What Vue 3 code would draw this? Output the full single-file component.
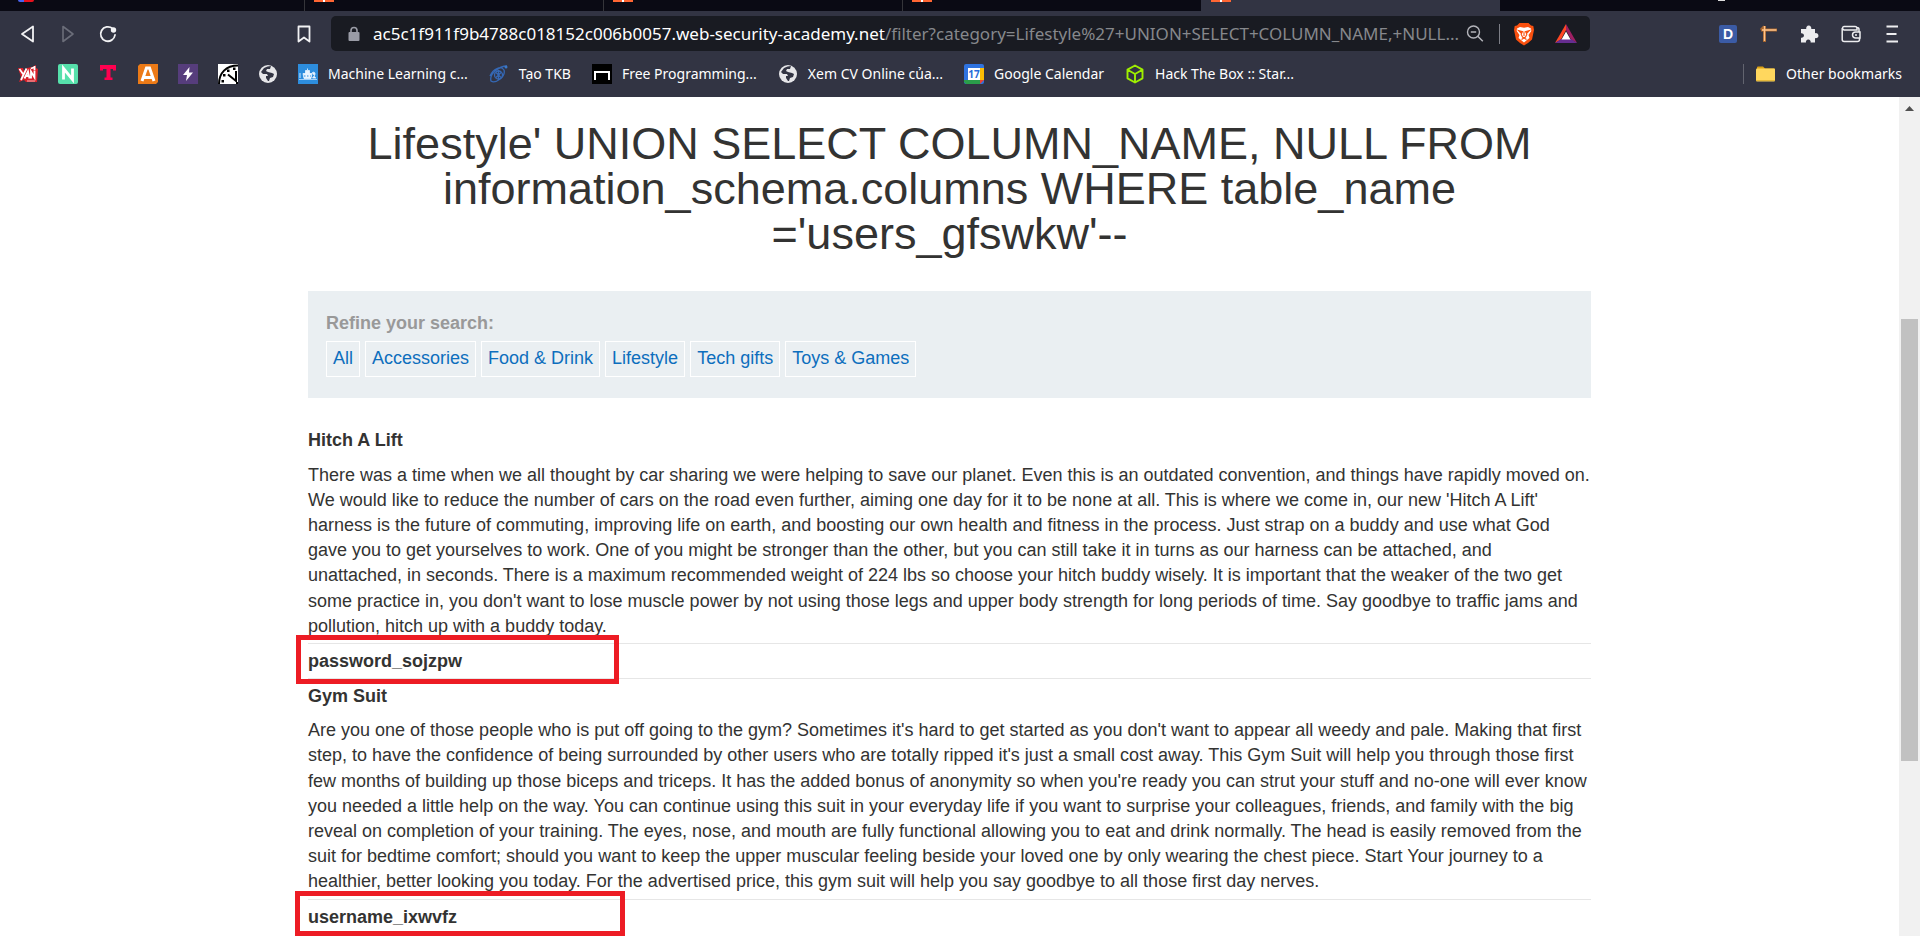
<script setup>
const tabs = [{ kind: 'ring' }, { kind: 'orange' }, { kind: 'orange' }, { kind: 'orange' }, { kind: 'orange', active: true }]
const bookmarks = [
  { icon: 'yan', name: 'Yan' },
  { icon: 'n', name: 'N' },
  { icon: 't', name: 'T' },
  { icon: 'a', name: 'A' },
  { icon: 'bolt', name: 'Bolt' },
  { icon: 'clock', name: 'Clock' },
  { icon: 'globe', name: 'Site' },
  { icon: 'ml', name: 'Machine Learning', label: 'Machine Learning c...' },
  { icon: 'orbit', name: 'Tạo TKB', label: 'Tạo TKB' },
  { icon: 'free', name: 'Free Programming', label: 'Free Programming...' },
  { icon: 'globe', name: 'Xem CV Online', label: 'Xem CV Online của...' },
  { icon: 'cal', name: 'Google Calendar', label: 'Google Calendar' },
  { icon: 'cube', name: 'Hack The Box', label: 'Hack The Box :: Star...' },
]
const filters = ['All', 'Accessories', 'Food & Drink', 'Lifestyle', 'Tech gifts', 'Toys & Games']
const rows = [
  {
    title: 'Hitch A Lift',
    text: "There was a time when we all thought by car sharing we were helping to save our planet. Even this is an outdated convention, and things have rapidly moved on. We would like to reduce the number of cars on the road even further, aiming one day for it to be none at all. This is where we come in, our new 'Hitch A Lift' harness is the future of commuting, improving life on earth, and boosting our own health and fitness in the process. Just strap on a buddy and use what God gave you to get yourselves to work. One of you might be stronger than the other, but you can still take it in turns as our harness can be attached, and unattached, in seconds. There is a maximum recommended weight of 224 lbs so choose your hitch buddy wisely. It is important that the weaker of the two get some practice in, you don't want to lose muscle power by not using those legs and upper body strength for long periods of time. Say goodbye to traffic jams and pollution, hitch up with a buddy today.",
  },
  { title: 'password_sojzpw', mark: 'mark-a' },
  {
    title: 'Gym Suit',
    text: "Are you one of those people who is put off going to the gym? Sometimes it's hard to get started as you don't want to appear all weedy and pale. Making that first step, to have the confidence of being surrounded by other users who are totally ripped it's just a small cost away. This Gym Suit will help you through those first few months of building up those biceps and triceps. It has the added bonus of anonymity so when you're ready you can strut your stuff and no-one will ever know you needed a little help on the way. You can continue using this suit in your everyday life if you want to surprise your colleagues, friends, and family with the big reveal on completion of your training. The eyes, nose, and mouth are fully functional allowing you to eat and drink normally. The head is easily removed from the suit for bedtime comfort; should you want to keep the upper muscular feeling beside your loved one by only wearing the chest piece. Start Your journey to a healthier, better looking you today. For the advertised price, this gym suit will help you say goodbye to all those first day nerves.",
  },
  { title: 'username_ixwvfz', mark: 'mark-b' },
]
</script>

<template>
  <div class="window">
    <header class="chrome">
      <div class="tabs">
        <div v-for="(t, i) in tabs" :key="i" class="tab" :class="{ active: t.active }">
          <i class="fav" :class="t.kind"></i>
        </div>
        <i class="dot"></i>
      </div>
      <div class="toolbar">
        <div class="nav">
          <button class="tool" aria-label="Back"><svg viewBox="0 0 20 20"><path d="M15 2.500v15L4 10z" fill="none" stroke="#f2f2f4" stroke-width="1.800" stroke-linejoin="round" /></svg></button>
          <button class="tool" aria-label="Forward"><svg viewBox="0 0 20 20"><path d="M5 2.500v15L15 10z" fill="none" stroke="#6b6d79" stroke-width="1.600" stroke-linejoin="round" /></svg></button>
          <button class="tool" aria-label="Reload"><svg viewBox="0 0 20 20"><path d="M14.500 4.500A7.200 7.200 0 1 0 17 11" fill="none" stroke="#f2f2f4" stroke-width="1.800" stroke-linecap="round" /><circle cx="15.500" cy="6" r="2.700" fill="#f2f2f4" /></svg></button>
        </div>
        <button class="tool save" aria-label="Bookmark this page"><svg viewBox="0 0 20 20"><path d="M4.500 2.500h11v15L10 13.500 4.500 17.500z" fill="none" stroke="#f2f2f4" stroke-width="1.800" stroke-linejoin="round" /></svg></button>
        <div class="address">
          <svg class="lock" viewBox="0 0 12 16"><rect x="1" y="6" width="11" height="9" rx="1" fill="#9a9ca6" /><path d="M3.500 7V4.500a3 3 0 0 1 6 0V7" fill="none" stroke="#9a9ca6" stroke-width="1.600" /></svg>
          <a class="url" href="#"><span class="host">ac5c1f911f9b4788c018152c006b0057.web-security-academy.net</span><span class="path">/filter?category=Lifestyle%27+UNION+SELECT+COLUMN_NAME,+NULL...</span></a>
          <button class="tool zoom" aria-label="Zoom"><svg viewBox="0 0 20 20"><circle cx="8.500" cy="8" r="6" fill="none" stroke="#b4b5bb" stroke-width="1.400" /><path d="M5.800 8h5.400M12.800 12.300l5 5" stroke="#b4b5bb" stroke-width="1.500" /></svg></button>
          <i class="rule"></i>
          <button class="shield" aria-label="Brave Shields"><svg viewBox="0 0 20 24"><path d="M5.500 1h9L17 3.500l2.300.5.700 4-2 9.500-4 3.500-4 2.500L6 21l-4-3.500L0 8l.7-4L3 3.500z" fill="#f9500f" /><path d="M3 6.500 6 5l4 .800L14 5l3 1.500.300 2.500-2.800 4 1 3-2.500 2L10 20.500 7 18l-2.500-2 1-3L2.700 9z" fill="#fff" /><path d="m4.500 8.500 4 1-1 2zM15.500 8.500l-4 1 1 2zM10 9.500V14M7 12l1.500 3L10 16l1.500-1L13 12M7.500 17.500 10 16l2.500 1.500" fill="none" stroke="#f9500f" stroke-width="1.100" /></svg></button>
          <button class="bat" aria-label="Brave Rewards"><svg viewBox="0 0 22 19"><path d="M11 0 0 19l6-3.500L11 6z" fill="#ff4724" /><path d="M11 0l11 19-6-3.500L11 6z" fill="#9e1f63" /><path d="M0 19h22l-6-4H6z" fill="#662d91" /><path d="M11 7.500 15.500 15.500h-9z" fill="#fff" /></svg></button>
        </div>
        <div class="extensions">
          <button class="tool" aria-label="Dictionary"><svg viewBox="0 0 20 20"><rect x="1" y="1" width="18" height="18" rx="2" fill="#3b5ba5" /><text x="10" y="15" text-anchor="middle" font-size="14" font-weight="700" fill="#fff">D</text></svg></button>
          <button class="tool" aria-label="Crane"><svg viewBox="0 0 20 20"><path d="M5.500 2v16M2 6h16M2 6l3.500-3.500" stroke="#a5652f" stroke-width="3" /><path d="M5.500 2v15M3 6h14.500" stroke="#ffc48a" stroke-width="1.400" /></svg></button>
          <button class="tool" aria-label="Extensions"><svg viewBox="0 0 20 20"><path d="M1 5h5.300a2.600 2.600 0 1 1 4.900 0h3.800v4.200a2.600 2.600 0 1 1 0 4.900V18.500h-4.400a2.400 2.400 0 1 0-4.600 0H1v-4.800a2.300 2.300 0 1 0 0-4.400z" fill="#ededf0" /></svg></button>
          <button class="tool" aria-label="Wallet"><svg viewBox="0 0 20 20"><path d="M18 8V5.500a2 2 0 0 0-2-2M16 6H3a2 2 0 0 1-1.500-2A1.700 1.700 0 0 1 3 2.500h11a2 2 0 0 1 2 2zM1.200 4v11.500a2 2 0 0 0 2 2H16.500a2 2 0 0 0 2-2V14M19 8h-4.500a3 3 0 0 0 0 6H19z" fill="none" stroke="#ededf0" stroke-width="1.500" /><path d="M14 11h2" stroke="#ededf0" stroke-width="1.500" /></svg></button>
          <button class="tool" aria-label="Menu"><svg viewBox="0 0 20 20"><path d="M4.500 2.500h11.500M4.500 10H14.500M4.500 17.500h11.500" stroke="#ededf0" stroke-width="1.800" /></svg></button>
        </div>
      </div>
      <nav class="bookmarks" aria-label="Bookmarks">
        <a v-for="(b, i) in bookmarks" :key="i" class="bookmark" href="#" :aria-label="b.name">
          <svg v-if="b.icon === 'yan'" viewBox="0 0 20 20"><path d="M0 4h5l1 3 3-3 5-1 4-2v3l2 1-1 13H8l-2-2-5 2 2-5z" fill="#d9202a" /><path d="M1.500 5 5 10M8.500 4.500 3 16M6.500 14.500l3.500-7 1.500 7M8 12h3M13 14.500V7.500l3.500 6V6.500M13 4.500l4-1.500M16.500 2v4" fill="none" stroke="#fff" stroke-width="1.800" /><path d="M9 17h8" stroke="#f6b7b7" /></svg>
          <svg v-else-if="b.icon === 'n'" viewBox="0 0 20 20"><rect width="20" height="20" rx="2" fill="#56e0ab" /><path d="M5.500 15.500v-11l9 11v-11" fill="none" stroke="#fff" stroke-width="2.800" /></svg>
          <svg v-else-if="b.icon === 't'" viewBox="0 0 20 20"><path d="M2 1h16v5.500h-3V5H12.500v8.500h2V16h-8v-2.500h2V5H5v1.500H2z" fill="#ff0050" /></svg>
          <svg v-else-if="b.icon === 'a'" viewBox="0 0 20 20"><path d="M2 0h18v18l-2 2H0V2z" fill="#ec7a17" /><path d="M4 17 8.500 4h3L16 17M5.500 13.500h9" fill="none" stroke="#fff" stroke-width="3" /></svg>
          <svg v-else-if="b.icon === 'bolt'" viewBox="0 0 20 20"><rect width="20" height="20" fill="#563d7c" /><path d="M11.500 3 5 11h4l-1 6 7-8.500h-4z" fill="#fff" /></svg>
          <svg v-else-if="b.icon === 'clock'" viewBox="0 0 20 20"><rect width="20" height="20" fill="#fff" /><path d="M1 20C1 9 8 1.500 20 1.500" fill="none" stroke="#000" stroke-width="2" /><path d="M10 10.500l8 6.500V7" fill="none" stroke="#000" stroke-width="2" /><path d="M5 10h2.500v2.500H5zM9 5.500h2.500V8H9zM15 3.500h2.500V6H15zM3.500 16H6v2.500H3.500zM18 18h2v2h-2z" /></svg>
          <svg v-else-if="b.icon === 'globe'" viewBox="0 0 20 20"><circle cx="10" cy="10" r="9" fill="#e6e6e9" /><path d="M9.500 2.500 6 4 3 8l2 2h4l1 2H8v2l2 3h1l1-3 3-1 1-3-2-1-4-1-2-1 1-2h3l1-3z" fill="#323443" /></svg>
          <svg v-else-if="b.icon === 'ml'" viewBox="0 0 20 20"><rect width="20" height="20" fill="#2d8ddd" /><path d="M1 15.500h18" stroke="#9fd0fa" /><path d="M5 9.500h9l-1 5H6zM7.500 6.500h4V10h-4zM14 9c2-2 4 0 2.500 2.500L14.500 14H18" fill="#e9f4ff" stroke="#e9f4ff" stroke-width="0.800" /><path d="M6 12h1.500M9 12h1.500M12 12h1M3 9v5" stroke="#2d8ddd" /><path d="M2 9v5M9.500 4.500v2" stroke="#cfe7ff" /></svg>
          <svg v-else-if="b.icon === 'orbit'" viewBox="0 0 20 20"><g fill="none" stroke="#3568b5" stroke-width="1.300"><path d="M18 2C10 2 0 10 2 17c4 3 15-4 13-11C12 1 4 5 1 12" /><circle cx="9.500" cy="11" r="4" /><path d="M7 8.500l5 5M12 8.500l-5 5M9.500 6v10" /></g><circle cx="17" cy="3" r="1.500" fill="#3b79c9" /></svg>
          <svg v-else-if="b.icon === 'free'" viewBox="0 0 20 20"><rect width="20" height="20" fill="#000" /><path d="M3 16V8h14v8" fill="none" stroke="#fff" stroke-width="2" /></svg>
          <svg v-else-if="b.icon === 'cal'" viewBox="0 0 20 20"><rect width="20" height="20" rx="2" fill="#2f73e0" /><path d="M16 4h4v12h-4z" fill="#fbbc04" /><path d="M0 16h16v4H2l-2-2z" fill="#2a9d4a" /><path d="M16 16h4l-4 4z" fill="#ea4335" /><path d="M4 4h12v12H4z" fill="#fff" /><text x="10" y="14" text-anchor="middle" font-size="10" font-weight="700" fill="#2a6bd8">17</text></svg>
          <svg v-else viewBox="0 0 20 20"><path d="M10 1.500 17.500 5.700v8.600L10 18.500 2.500 14.300V5.700zM2.500 5.700 10 10l7.500-4.300M10 10v8.500" fill="none" stroke="#9fef00" stroke-width="1.900" stroke-linejoin="round" /></svg>
          <span v-if="b.label" class="label">{{ b.label }}</span>
        </a>
        <a class="bookmark other" href="#"><svg viewBox="0 0 20 20"><path d="M1 3.500a1 1 0 0 1 1-1h5l2 2h9a1 1 0 0 1 1 1V8H1z" fill="#dba014" /><rect x="0" y="4.500" width="19" height="13" rx="1" fill="#ffd75e" /><path d="M0 16.500h19" stroke="#e5b93a" /></svg><span>Other bookmarks</span></a>
      </nav>
    </header>

    <div class="viewport">
      <main class="page">
        <h1>Lifestyle' UNION SELECT COLUMN_NAME, NULL FROM information_schema.columns WHERE table_name ='users_gfswkw'--</h1>
        <section class="filters">
          <strong>Refine your search:</strong>
          <div class="tags"><a v-for="f in filters" :key="f" href="#">{{ f }}</a></div>
        </section>
        <table>
          <tbody v-for="r in rows" :key="r.title">
            <tr><th scope="row"><i v-if="r.mark" class="mark" :class="r.mark"></i>{{ r.title }}</th></tr>
            <tr v-if="r.text"><td>{{ r.text }}</td></tr>
          </tbody>
        </table>
      </main>
      <div class="scroll" aria-hidden="true">
        <svg viewBox="0 0 21 20"><path d="M6 14 10.500 9 15 14z" fill="#505050" /></svg>
        <i class="thumb"></i>
      </div>
    </div>
  </div>
</template>

<style>
html, body, #app { height: 100%; margin: 0; }
body { overflow: hidden; }
</style>

<style scoped>
* { box-sizing: border-box; }
.window { height: 100%; display: flex; flex-direction: column; background: #fff; color: #333332; font: 18px/1.4 "Liberation Sans", Arial, sans-serif; }
a { text-decoration: none; }
button { border: 0; padding: 0; background: none; display: flex; align-items: center; justify-content: center; }
svg { display: block; flex: none; }
.chrome { flex: none; background: #323443; color: #fff; font-family: "Noto Sans", sans-serif; }
.tabs { position: relative; height: 11px; display: flex; background: #0a0a14; }
.tab { width: 299px; padding-left: 9px; border-left: 1px solid #35353a; }
.tab:first-child { width: 304px; padding-left: 18px; border: 0; }
.tab.active { border-color: #323443; background: #323443; }
.fav { display: block; width: 20px; height: 2px; background: linear-gradient(90deg, #ff6633 45%, #fff 45%, #fff 55%, #ff6633 55%); }
.fav.ring { width: 16px; border-radius: 0 0 8px 8px; background: linear-gradient(90deg, #4a63f0 40%, #e8101c 40%); }
.dot { position: absolute; right: 195px; top: 0; width: 7px; height: 1px; background: #ddd; }
.toolbar { display: flex; align-items: center; height: 45px; padding: 0 18px; }
.tool { width: 20px; height: 20px; }
.tool svg { width: 20px; height: 20px; }
.nav { display: flex; gap: 20px; }
.save { margin-left: 176px; }
.address { flex: 1; min-width: 0; height: 35px; margin-left: 17px; padding: 0 13px 0 16px; display: flex; align-items: center; border-radius: 5px; background: #191b22; }
.lock { width: 13px; height: 16px; }
.url { flex: 1; min-width: 0; margin-left: 13px; overflow: hidden; white-space: nowrap; font-size: 17px; line-height: 24px; color: #fff; }
.path { color: #86888c; }
.zoom { margin-left: 4px; }
.rule { width: 1px; height: 20px; margin: 0 14px; background: #7c7e86; }
.shield svg { width: 20px; height: 24px; }
.bat { margin-left: 21px; }
.bat svg { width: 22px; height: 19px; }
.extensions { display: flex; gap: 21px; margin-left: 128px; }
.bookmarks { display: flex; align-items: center; gap: 20px; height: 41px; padding: 0 18px 5px; }
.bookmark { display: flex; align-items: center; gap: 10px; color: #fff; font-size: 14px; line-height: 20px; white-space: nowrap; }
.bookmark svg { width: 20px; height: 20px; }
.label { padding-right: 1px; }
.other { margin-left: auto; padding-left: 12px; border-left: 1px solid #62646f; }
.viewport { flex: 1; min-height: 0; display: flex; overflow: hidden; }
.page { flex: 1; min-width: 0; padding: 24px 308px 0; }
h1 { margin: 0; padding: 0 48px; font-size: 45px; line-height: 45px; font-weight: 400; text-align: center; }
.filters { margin: 35px 0 24px; padding: 20px 18px 18px; background: #eaeff2; }
.filters strong { display: block; color: #999; }
.tags { display: flex; gap: 5px; margin: 5px 0 3px; }
.tags a { padding: 4px 6px 5px; border: 1px solid #fff; color: #0d6ebd; }
table { width: 100%; border-collapse: separate; border-spacing: 0; }
th, td { padding: 5px 0 4px; text-align: left; vertical-align: top; }
td { padding-right: 1px; }
th { position: relative; border-top: 1px solid #e6e6e6; }
tbody:first-child th { border-color: transparent; }
.mark { position: absolute; z-index: 1; border: 5px solid #ed1c24; }
.mark-a { left: -12px; top: -9px; width: 323px; height: 49px; }
.mark-b { left: -13px; top: -9px; width: 330px; height: 45px; }
.scroll { flex: none; width: 21px; background: #f1f1f1; }
.scroll svg { width: 21px; height: 20px; }
.thumb { display: block; width: 17px; height: 442px; margin: 202px 2px 0; background: #c1c1c1; }
</style>
